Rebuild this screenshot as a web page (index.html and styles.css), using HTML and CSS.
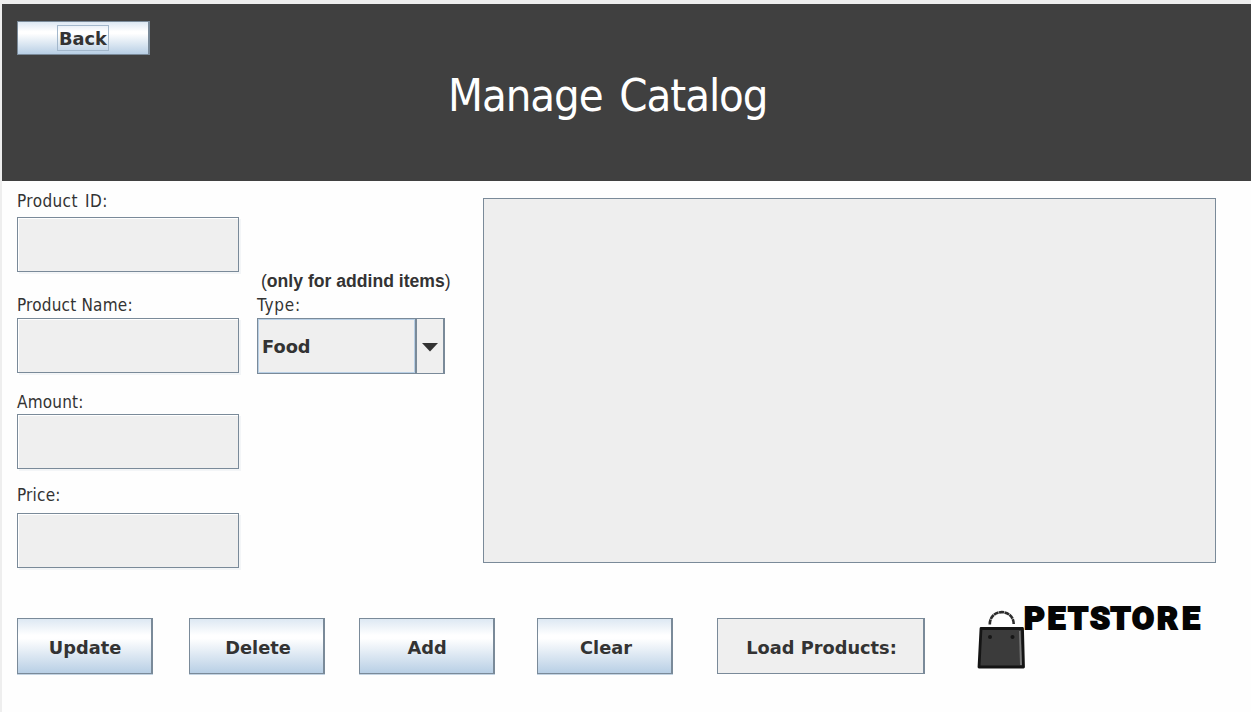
FILE: index.html
```
<!DOCTYPE html>
<html lang="en">
<head>
<meta charset="utf-8">
<title>Manage Catalog</title>
<link rel="stylesheet" href="styles.css">
</head>
<body>
<div class="window">
  <header class="header">
    <button class="btn back"><span class="focus">Back</span></button>
    <h1 class="title">Manage Catalog</h1>
  </header>
  <main class="main">
    <form class="form">
      <label class="label id-label">Product ID:</label>
      <div class="field"></div>
      <label class="label name-label">Product Name:</label>
      <div class="field"></div>
      <label class="label amount-label">Amount:</label>
      <div class="field"></div>
      <label class="label price-label">Price:</label>
      <div class="field"></div>
    </form>
    <section class="type">
      <div class="note"><span class="paren">(</span>only for addind items<span class="paren">)</span></div>
      <div class="label type-label">Type:</div>
      <div class="combo">
        <div class="combo-value"><span>Food</span></div>
        <div class="combo-arrow"><svg width="16" height="9" viewBox="0 0 16 9"><path d="M0 0h16L8 8.5z" fill="#333"/></svg></div>
      </div>
    </section>
    <section class="list"></section>
  </main>
  <footer class="actions">
    <button class="btn update">Update</button>
    <button class="btn delete">Delete</button>
    <button class="btn add">Add</button>
    <button class="btn clear">Clear</button>
    <button class="btn load">Load Products:</button>
    <svg class="logo" width="230" height="70" viewBox="0 0 230 70">
      <path d="M13.800 24.500C13.500 8 38 8 37.700 24.500" fill="none" stroke="#2c2c2c" stroke-width="2.600" stroke-dasharray="5 .5"/>
      <path d="M5 28.500H46.500L47.500 67H3z" fill="#3b3b3b" stroke="#141414" stroke-width="2.800" stroke-linejoin="round"/>
      <path d="M43 31l1 34h2L44.500 31z" fill="#777"/>
      <circle cx="14" cy="37" r="2" fill="#161616"/>
      <circle cx="36.500" cy="37" r="2" fill="#161616"/>
      <text class="logo-text" x="48 71.500 92 114 134.500 156 181 206" y="29">PETSTORE</text>
    </svg>
  </footer>
</div>
</body>
</html>
```
FILE: styles.css
```
* { box-sizing: border-box; }
body {
  margin: 0;
  background: #eee;
  color: #333;
  font-family: "DejaVu Sans", sans-serif;
}
.window {
  height: 712px;
  padding: 4px 0 0 2px;
  background: linear-gradient(#fefefe, #fefefe) 2px 4px no-repeat, #eee;
  overflow: hidden;
}
.header {
  height: 177px;
  padding: 17px 0 0 15px;
  background: #404040;
}
.title {
  width: max-content;
  margin: 13px 0 0 431px;
  color: #fff;
  font: 400 45px/56px "DejaVu Sans Condensed", "DejaVu Sans", sans-serif;
  font-stretch: condensed;
  letter-spacing: -1.05px;
  word-spacing: 5px;
}
.btn {
  display: flex;
  align-items: center;
  justify-content: center;
  width: 136px;
  height: 56px;
  padding: 3px 0 0 1px;
  border: 1px solid #7a8a99;
  border-right-width: 2px;
  background: linear-gradient(#dde8f3 0%, #fff 30%, #fff 36%, #b8cfe5 100%);
  box-shadow: 0 1px 0 #c3d3e2;
  color: #333;
  font: 700 17.8px/24px "DejaVu Sans", sans-serif;
}
.back {
  width: 133px;
  height: 34px;
  padding: 0;
  box-shadow: none;
}
.focus {
  height: 26px;
  padding: 0 1px;
  border: 1px solid #a3b8cc;
  line-height: 26px;
}
.main {
  display: flex;
  height: 437px;
  padding-left: 15px;
}
.form { width: 222px; }
.label {
  display: block;
  font: 400 17px/20px "DejaVu Sans Condensed", "DejaVu Sans", sans-serif;
  font-stretch: condensed;
  letter-spacing: 0.2px;
}
.id-label { padding-top: 10px; height: 36px; word-spacing: 2px; letter-spacing: 0.4px; }
.name-label { padding-top: 23px; height: 46px; }
.amount-label { padding-top: 19px; height: 41px; }
.price-label { padding-top: 16px; height: 44px; }
.field {
  height: 55px;
  border: 1px solid #7a8a99;
  background: #efefef;
  box-shadow: inset 1px 1px #fff, 2px 2px #f3f5f7;
}
.type {
  width: 226px;
  margin-left: 18px;
  padding-top: 89px;
}
.note {
  padding-left: 4px;
  font: 700 17.6px/22px "Liberation Sans", Arial, sans-serif;
  white-space: nowrap;
}
.paren { font-weight: 400; }
.type-label { padding-top: 3px; height: 26px; letter-spacing: 0.8px; }
.combo {
  display: flex;
  width: 188px;
  height: 56px;
  border: 1px solid #7a8a99;
  border-right-width: 2px;
  background: #efefef;
}
.combo-value {
  width: 157px;
  padding-left: 4px;
  box-shadow: inset 0 0 0 1px #b8cfe5;
  font: 700 17.8px/55px "DejaVu Sans", sans-serif;
}
.combo-arrow {
  flex: 1;
  display: flex;
  align-items: center;
  justify-content: center;
  padding-top: 2px;
  border-left: 2px solid #7a8a99;
}
.list {
  width: 733px;
  height: 365px;
  margin-top: 17px;
  border: 1px solid #7a8a99;
  background: #eee;
}
.actions {
  display: flex;
  padding-left: 15px;
}
.delete { margin-left: 36px; padding-left: 3px; }
.add { margin-left: 34px; }
.clear { margin-left: 42px; padding-left: 3px; }
.load {
  width: 208px;
  margin-left: 44px;
  padding-left: 2px;
  background: #efefef;
  box-shadow: none;
}
.logo {
  margin: -18px 0 0 51px;
  overflow: visible;
}
.logo-text {
  font: 900 32px "Roboto", sans-serif;
  fill: #050505;
  stroke: #050505;
  stroke-width: 1.8px;
}
```
